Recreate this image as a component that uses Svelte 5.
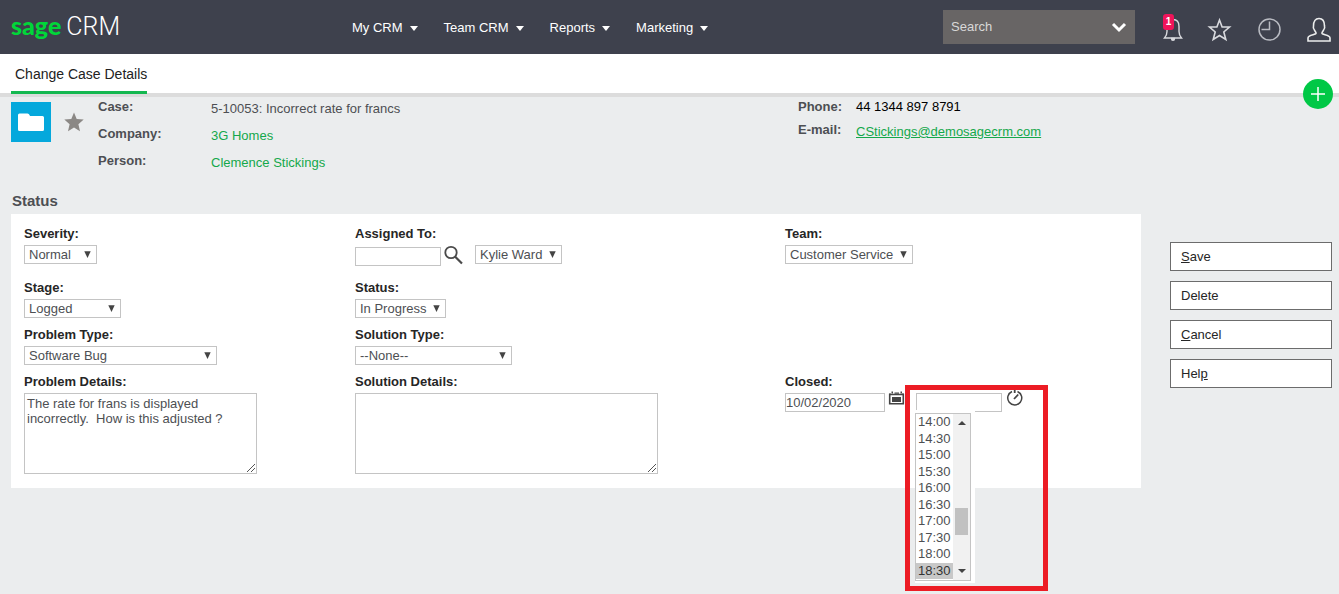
<script lang="ts">
  const menus = ['My CRM', 'Team CRM', 'Reports', 'Marketing'];

  const times = [
    '14:00', '14:30', '15:00', '15:30', '16:00',
    '16:30', '17:00', '17:30', '18:00', '18:30'
  ];

  // key is the underlined shortcut letter
  const actions = [
    { before: '', key: 'S', after: 'ave' },
    { before: 'Delete', key: '', after: '' },
    { before: '', key: 'C', after: 'ancel' },
    { before: 'Hel', key: 'p', after: '' }
  ];

  let search = $state('');
  let assignedSearch = $state('');
  let problem = $state('The rate for frans is displayed incorrectly.  How is this adjusted ?');
  let solution = $state('');
  let closedDate = $state('10/02/2020');
  let closedTime = $state('');
  let pickedTime = $state('18:30');
</script>

{#snippet dropdown(id: string, value: string, size: string, label?: string)}
  <span class="select {size}">
    <select {id} aria-label={label}>
      <option>{value}</option>
    </select>
    <svg class="arrow" width="7" height="7" viewBox="0 0 7 7" aria-hidden="true">
      <path d="M0.3 0.300h6.400L3.500 7z" fill="#444" />
    </svg>
  </span>
{/snippet}

{#snippet grip()}
  <svg class="grip" width="10" height="10" viewBox="0 0 10 10" aria-hidden="true">
    <path d="M1 9L9 1M5 9l4-4" stroke="#555" fill="none" />
  </svg>
{/snippet}

<div class="page">
  <header class="topbar">
    <a class="logo" href="#home"><b>sage</b><span>CRM</span></a>

    <nav class="menu">
      {#each menus as menu}
        <button type="button">
          {menu}
          <svg width="8" height="5" viewBox="0 0 8 5" aria-hidden="true"><path d="M0 0h8L4 5z" fill="#fff" /></svg>
        </button>
      {/each}
    </nav>

    <div class="search">
      <input type="text" placeholder="Search" aria-label="Search" bind:value={search} />
      <button type="button" aria-label="Search options">
        <svg width="16" height="11" viewBox="0 0 16 11"><path d="M2 2l6 6 6-6" fill="none" stroke="#fff" stroke-width="3" /></svg>
      </button>
    </div>

    <div class="tools">
      <button type="button" aria-label="Notifications">
        <svg width="20" height="26" viewBox="2 0 20 26" fill="none" stroke="#d9dade" stroke-width="1.4">
          <path d="M12 3.500c-4 0-6 3-6 7v5c0 2.500-.8 4.500-2.500 6.500h17c-1.700-2-2.500-4-2.500-6.500v-5c0-4-2-7-6-7z" />
          <path d="M10.500 22.500a1.500 1.800 0 0 0 3 0z" fill="#d9dade" />
        </svg>
        <span class="badge">1</span>
      </button>
      <button type="button" aria-label="Favourites">
        <svg width="28" height="26" viewBox="-2 0 28 26" fill="none" stroke="#d9dade" stroke-width="1.600">
          <path d="M12.500 4l2.600 7h7.400l-5.700 5 2 7.500-6.300-4-6.300 4 2-7.500-5.700-5h7.400z" />
        </svg>
      </button>
      <button type="button" aria-label="Recent">
        <svg width="28" height="26" viewBox="-2 0 28 26" fill="none" stroke="#b9bbc2" stroke-width="1.500">
          <circle cx="12.500" cy="13.500" r="10.500" />
          <path d="M12.500 5.500v8h-8" />
        </svg>
      </button>
      <button type="button" aria-label="Profile">
        <svg width="28" height="26" viewBox="-2 0 28 26" fill="none" stroke="#eceded" stroke-width="1.600">
          <path d="M9 17.500c.4-1-1-2-1.600-3.500C6.500 13 6 11.500 6.500 10c0-5 2-7.500 5.500-7.500s5.500 2.500 5.500 7.500c.5 1.500 0 3-.9 4-.6 1.500-2 2.500-1.600 3.500 1 1.500 8 1 8 4.500v3H1v-3c0-3.500 7-3 8-4.500z" />
        </svg>
      </button>
    </div>
  </header>

  <div class="tabs">
    <a class="tab" href="#details">Change Case Details</a>
    <button class="add" type="button" aria-label="Add">
      <svg width="16" height="16" viewBox="0 0 16 16"><path d="M8 1v14M1 8h14" stroke="#fff" stroke-width="1.500" /></svg>
    </button>
  </div>

  <section class="summary">
    <svg class="folder" width="40" height="40" viewBox="0 0 40 40" aria-hidden="true">
      <path d="M0 0h40v40H0z" fill="#05a8dc" />
      <path d="M7 13q0-1.500 1.500-1.500h8q1.500 0 2 1.500l.5 1h12.500q1.500 0 1.500 1.500V27.500q0 1.500-1.500 1.500h-23Q7 29 7 27.500z" fill="#fff" />
    </svg>
    <svg class="star" width="20" height="20" viewBox="0 0 20 20" aria-hidden="true">
      <path d="M10 0.500l2.700 6.500 7 .6-5.300 4.700 1.600 7L10 15.600l-6 3.700 1.600-7L.3 7.600l7-.6z" fill="#8b8885" />
    </svg>
    <dl class="case">
      <dt>Case:</dt>
      <dd>5-10053: Incorrect rate for francs</dd>
      <dt>Company:</dt>
      <dd><a href="#company">3G Homes</a></dd>
      <dt>Person:</dt>
      <dd><a href="#person">Clemence Stickings</a></dd>
    </dl>
    <dl class="contact">
      <dt>Phone:</dt>
      <dd class="phone">44 1344 897 8791</dd>
      <dt>E-mail:</dt>
      <dd class="email"><a href="mailto:CStickings@demosagecrm.com">CStickings@demosagecrm.com</a></dd>
    </dl>
  </section>

  <main class="body">
    <section class="status">
      <h2>Status</h2>
      <form class="panel">
        <div class="field">
          <label for="severity">Severity:</label>
          {@render dropdown('severity', 'Normal', 'w-severity')}
        </div>
        <div class="field">
          <label for="assigned">Assigned To:</label>
          <div class="assigned">
            <input id="assigned" class="short" type="text" bind:value={assignedSearch} />
            <button type="button" class="icon" aria-label="Find user">
              <svg width="20" height="20" viewBox="0 0 20 20" fill="none" stroke="#4a4a4a">
                <circle cx="7" cy="7.500" r="5.700" stroke-width="1.800" />
                <path d="M11 11.500l7 7" stroke-width="2.200" />
              </svg>
            </button>
            {@render dropdown('assignee', 'Kylie Ward', 'w-user', 'Assigned user')}
          </div>
        </div>
        <div class="field first">
          <label for="team">Team:</label>
          {@render dropdown('team', 'Customer Service', 'w-team')}
        </div>

        <div class="field">
          <label for="stage">Stage:</label>
          {@render dropdown('stage', 'Logged', 'w-stage')}
        </div>
        <div class="field wide">
          <label for="status">Status:</label>
          {@render dropdown('status', 'In Progress', 'w-status')}
        </div>

        <div class="field">
          <label for="problem-type">Problem Type:</label>
          {@render dropdown('problem-type', 'Software Bug', 'w-problem')}
        </div>
        <div class="field wide">
          <label for="solution-type">Solution Type:</label>
          {@render dropdown('solution-type', '--None--', 'w-solution')}
        </div>

        <div class="field">
          <label for="problem">Problem Details:</label>
          <div class="area problem">
            <textarea id="problem" bind:value={problem}></textarea>
            {@render grip()}
          </div>
        </div>
        <div class="field">
          <label for="solution">Solution Details:</label>
          <div class="area solution">
            <textarea id="solution" bind:value={solution}></textarea>
            {@render grip()}
          </div>
        </div>
        <div class="field">
          <label for="closed">Closed:</label>
          <div class="closed">
            <input id="closed" class="date" type="text" bind:value={closedDate} />
            <button type="button" class="icon calendar" aria-label="Pick date">
              <svg width="18" height="16" viewBox="0 0 18 16">
                <path d="M1.700 4.500h13.600v9.300H1.700z" fill="none" stroke="#444" stroke-width="1.600" />
                <path d="M4 7h9v5H4zM3.500 1.500h1.500v2H3.500zM12.500 1.500h1.500v2h-1.500zM6.500 2.500h4.500v1.200h-4.500zM1 3.500h2v1H1zM14 3.500h2v1h-2z" fill="#444" />
              </svg>
            </button>
            <div class="time">
              <input class="short" type="text" aria-label="Closed time" bind:value={closedTime} />
              <button type="button" class="icon" aria-label="Pick time">
                <svg width="18" height="18" viewBox="0 0 18 18" fill="none" stroke="#444">
                  <path d="M11.500 2.500A7 7 0 1 1 6 2.500" stroke-width="1.500" />
                  <path d="M8.700 1v3M12.200 5.500L8 10" stroke-width="1.800" />
                </svg>
              </button>
              <div class="picker">
                <div class="picker-box">
                  <select size="10" aria-label="Time" bind:value={pickedTime}>
                    {#each times as time}
                      <option value={time}>{time}</option>
                    {/each}
                  </select>
                  <div class="scroll">
                    <svg width="8" height="4" viewBox="0 0 8 4"><path d="M0 4h8L4 0z" fill="#444" /></svg>
                    <div class="track"><div class="thumb"></div></div>
                    <svg width="8" height="4" viewBox="0 0 8 4"><path d="M0 0h8L4 4z" fill="#444" /></svg>
                  </div>
                </div>
              </div>
              <div class="highlight"></div>
            </div>
          </div>
        </div>
      </form>
    </section>

    <aside class="actions">
      {#each actions as { before, key, after }}
        <button type="button">{before}{#if key}<u>{key}</u>{/if}{after}</button>
      {/each}
    </aside>
  </main>
</div>

<style>
  :global(body) {
    background: #ebedee;
  }

  .page {
    min-height: 100vh;
    background: #ebedee;
    color: #4d4f53;
    font: 13px/16px 'Liberation Sans', Arial, sans-serif;
  }

  .page :global(*) {
    box-sizing: border-box;
  }

  button,
  input,
  select,
  textarea {
    font: inherit;
    color: inherit;
    margin: 0;
    border-radius: 0;
  }

  button {
    padding: 0;
    border: 0;
    background: none;
    cursor: pointer;
  }

  svg {
    display: block;
  }

  /* top bar */
  .topbar {
    display: flex;
    align-items: center;
    height: 54px;
    padding: 0 6px 0 11px;
    background: #3e414d;
    color: #fff;
  }

  .logo {
    display: flex;
    align-items: baseline;
    gap: 5px;
    width: 341px;
    padding-bottom: 2px;
    color: #fff;
    font: 25px/30px Lato, sans-serif;
    text-decoration: none;
  }

  .logo b {
    color: #00d639;
    font-weight: 900;
  }

  .logo span {
    font-family: Roboto, sans-serif;
    font-weight: 300;
  }

  .menu {
    display: flex;
    gap: 26px;
    padding-top: 2px;
  }

  .menu button {
    display: flex;
    align-items: center;
    gap: 7px;
  }

  .search {
    display: flex;
    align-items: center;
    width: 192px;
    height: 34px;
    margin-left: auto;
    padding: 0 8px;
    background: #686565;
  }

  .search input {
    flex: 1;
    min-width: 0;
    padding: 0;
    border: 0;
    outline: 0;
    background: none;
    color: #fff;
  }

  .search input::placeholder {
    color: #d8d8d8;
    opacity: 1;
  }

  .tools {
    display: flex;
    gap: 22px;
    margin-left: 28px;
    padding-top: 4px;
  }

  .tools button {
    position: relative;
  }

  .badge {
    position: absolute;
    top: -2px;
    left: 0;
    width: 11px;
    height: 16px;
    border-radius: 3px;
    background: #f0145a;
    color: #fff;
    font-size: 10px;
    font-weight: bold;
  }

  /* tab strip */
  .tabs {
    position: relative;
    display: flex;
    height: 43px;
    padding-left: 11px;
    border-bottom: 4px solid #dcdcdc;
    background: #fff;
  }

  .tab {
    height: 40px;
    padding: 0 0 0 4px;
    border-bottom: 3px solid #14b850;
    color: #222;
    font-size: 14px;
    line-height: 40px;
    text-decoration: none;
  }

  .add {
    position: absolute;
    top: 25px;
    right: 6px;
    display: grid;
    place-items: center;
    width: 30px;
    height: 30px;
    border-radius: 50%;
    background: #00c846;
  }

  /* case summary */
  .summary {
    display: flex;
    height: 96px;
    padding: 0 11px;
  }

  .folder {
    margin-top: 5px;
  }

  .star {
    margin: 15px 14px 0 13px;
  }

  dl {
    display: grid;
    align-content: start;
    margin: 0;
    padding-top: 2px;
  }

  dt {
    font-weight: bold;
  }

  dd {
    margin: 0;
    padding-top: 2px;
  }

  dd a {
    color: #14a84b;
    text-decoration: none;
  }

  .case {
    flex: 700;
    grid-template-columns: 113px 1fr;
    row-gap: 9px;
  }

  .contact {
    flex: 530;
    grid-template-columns: 58px 1fr;
    row-gap: 7px;
  }

  .phone {
    padding: 0;
    color: #000;
  }

  .email a {
    text-decoration: underline;
  }

  /* form */
  .body {
    display: flex;
    gap: 29px;
    padding: 0 7px 0 11px;
  }

  .status {
    flex: 1;
  }

  h2 {
    margin: 0;
    padding: 0 1px 5px;
    font-size: 15px;
    line-height: 16px;
  }

  .panel {
    display: grid;
    grid-template-columns: 331fr 430fr 356fr;
    row-gap: 9px;
    padding: 12px 0 14px 13px;
    background: #fff;
  }

  .field {
    display: flex;
    flex-direction: column;
    align-items: flex-start;
    gap: 3px;
  }

  .field.first {
    min-height: 45px;
  }

  .field.wide {
    grid-column: span 2;
  }

  label {
    color: #262626;
    font-weight: bold;
  }

  .panel input,
  .panel textarea,
  .select select {
    border: 1px solid #c4c4c4;
    background: #fff;
    outline: 0;
  }

  .panel input {
    height: 19px;
    padding: 0;
  }

  .select {
    position: relative;
    display: block;
  }

  .select select {
    display: block;
    width: 100%;
    height: 19px;
    padding: 0 4px;
    appearance: none;
    line-height: 16px;
  }

  .arrow {
    position: absolute;
    top: 6px;
    right: 6px;
    pointer-events: none;
  }

  .w-severity { width: 73px; }
  .w-user { width: 87px; }
  .w-team { width: 128px; }
  .w-stage { width: 97px; }
  .w-status { width: 91px; }
  .w-problem { width: 193px; }
  .w-solution { width: 157px; }

  .short { width: 86px; }
  .date { width: 100px; }

  .assigned {
    display: flex;
    align-items: flex-start;
    gap: 3px;
    height: 19px;
  }

  .assigned input {
    margin-top: 2px;
  }

  .assigned .select {
    margin-left: 8px;
  }

  .area {
    position: relative;
    height: 81px;
  }

  .area.problem { width: 233px; }
  .area.solution { width: 303px; }

  textarea {
    display: block;
    width: 100%;
    height: 100%;
    padding: 2px;
    line-height: 15px;
    resize: none;
  }

  .grip {
    position: absolute;
    right: 1px;
    bottom: 1px;
    pointer-events: none;
  }

  .closed,
  .time {
    display: flex;
    height: 19px;
  }

  .calendar {
    margin: -3px 10px 0 3px;
    align-self: flex-start;
  }

  .time {
    position: relative;
    gap: 4px;
  }

  .time .icon {
    align-self: flex-start;
    margin-top: -4px;
  }

  .picker {
    position: absolute;
    top: 17px;
    left: -1px;
    width: 60px;
    padding: 3px 4px 2px 0;
    background: #fff;
  }

  .picker-box {
    display: flex;
    border: 1px solid #c4c4c4;
  }

  .picker select {
    width: 37px;
    height: 166px;
    padding: 0;
    border: 0;
    outline: 0;
    overflow: hidden;
    background: #fff;
  }

  .picker option {
    height: 16px;
    min-height: 0;
    padding: 0 2px;
    line-height: 16px;
  }

  .picker option:nth-child(odd) {
    height: 17px;
  }

  .picker option:checked {
    background: linear-gradient(#c8c8c8, #c8c8c8);
    color: #333;
  }

  .scroll {
    flex: 1;
    display: flex;
    flex-direction: column;
    align-items: center;
    padding: 7px 0;
    background: #f1f1f1;
  }

  .track {
    flex: 1;
    display: flex;
    flex-direction: column;
    justify-content: flex-end;
    padding-bottom: 34px;
  }

  .thumb {
    width: 13px;
    height: 27px;
    background: #c1c1c1;
  }

  .highlight {
    position: absolute;
    top: -8px;
    left: -11px;
    width: 143px;
    height: 206px;
    border: 5px solid #ec1c24;
    pointer-events: none;
  }

  /* side buttons */
  .actions {
    display: flex;
    flex-direction: column;
    gap: 10px;
    width: 162px;
    padding-top: 49px;
  }

  .actions button {
    height: 29px;
    padding: 0 10px;
    border: 1px solid #6c6c6c;
    background: #fff;
    color: #262626;
    text-align: left;
  }
</style>
